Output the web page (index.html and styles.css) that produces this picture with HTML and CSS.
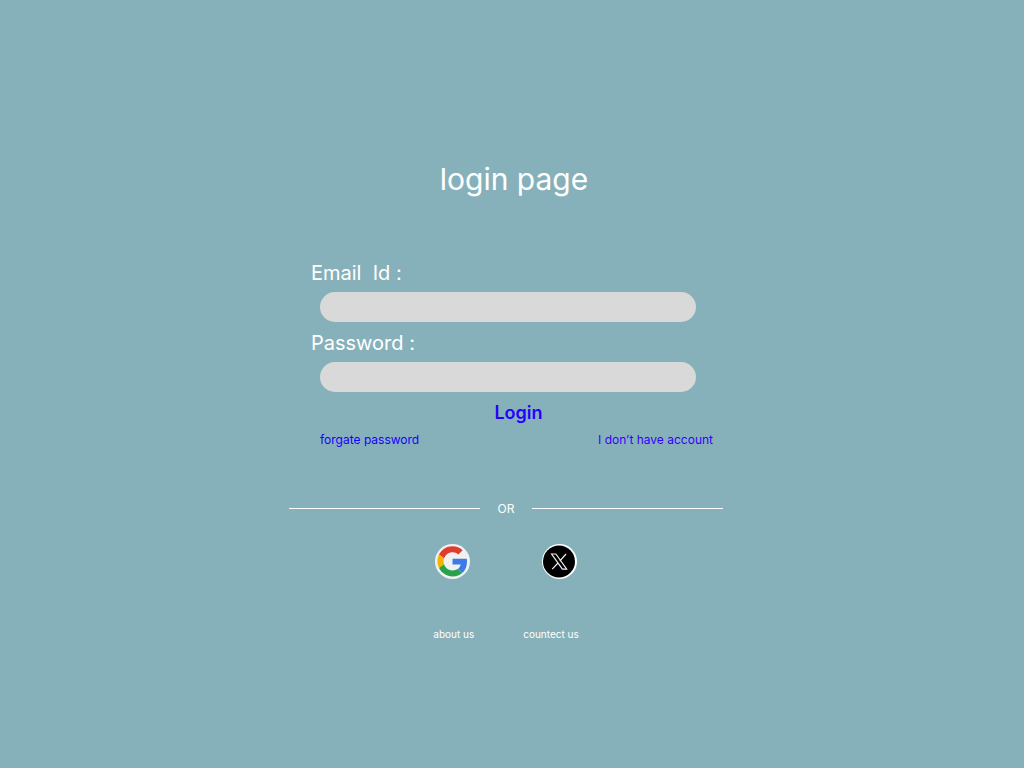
FILE: index.html
```html
<!DOCTYPE html>
<html lang="en">
<head>
<meta charset="utf-8">
<meta name="viewport" content="width=device-width, initial-scale=1">
<title>login page</title>
<link rel="stylesheet" href="styles.css">
</head>
<body>
<main class="login">
  <h1 class="title">login page</h1>
  <form class="form">
    <label class="label" for="email">Email&nbsp; Id :</label>
    <input class="field" id="email" type="email">
    <label class="label" for="password">Password :</label>
    <input class="field" id="password" type="password">
    <button class="submit" type="submit">Login</button>
  </form>
  <div class="help">
    <a class="forgot" href="#forgot">forgate password</a>
    <a class="signup" href="#signup">I don’t have account</a>
  </div>
  <div class="divider"><span>OR</span></div>
  <div class="social">
    <button class="provider" type="button" aria-label="Google">
      <svg viewBox="0 0 35 35" width="35" height="35" aria-hidden="true">
        <circle cx="17.500" cy="17.500" r="17.500" fill="#f1f1f1"/>
        <g transform="translate(2.400 2.200) scale(.63)">
          <path fill="#3f7be8" d="M46.980 24.550c0-1.570-.150-3.090-.380-4.550H24v9.020h12.940c-.580 2.960-2.260 5.480-4.780 7.180l7.730 6c4.510-4.180 7.090-10.360 7.090-17.650z"/>
          <path fill="#e03e2d" d="M24 9.500c3.540 0 6.710 1.220 9.210 3.600l6.850-6.850C35.900 2.380 30.470 0 24 0 14.620 0 6.510 5.380 2.560 13.220l7.980 6.190C12.430 13.720 17.740 9.500 24 9.500z"/>
          <path fill="#f4b400" d="M10.530 28.590c-.480-1.450-.760-2.990-.760-4.590s.270-3.140.760-4.590l-7.980-6.190C.920 16.460 0 20.120 0 24c0 3.880.920 7.540 2.560 10.780l7.970-6.190z"/>
          <path fill="#28a34c" d="M24 48c6.480 0 11.930-2.130 15.890-5.810l-7.730-6c-2.150 1.450-4.920 2.300-8.160 2.300-6.260 0-11.570-4.220-13.470-9.910l-7.980 6.190C6.510 42.620 14.620 48 24 48z"/>
        </g>
      </svg>
    </button>
    <button class="provider" type="button" aria-label="X">
      <svg viewBox="0 0 35 35" width="35" height="35" aria-hidden="true">
        <circle cx="17.500" cy="17.500" r="17.500" fill="#fff"/>
        <circle cx="17" cy="17.500" r="16" fill="#000"/>
        <path d="M9.600 10h4.300l10.800 15.200h-4.300zM24 10l-6.200 7M16 19l-5.800 6.200" fill="none" stroke="#eee" stroke-width="1.200"/>
      </svg>
    </button>
  </div>
  <footer class="footer">
    <a href="#about">about us</a>
    <a href="#contact">countect us</a>
  </footer>
</main>
</body>
</html>
```
FILE: styles.css
```css
* { box-sizing: border-box; }

body {
  min-height: 100vh;
  margin: 0;
  padding: 161px 12px 24px 0;
  background: #87b1ba;
  color: #fff;
  font-family: Inter, "Liberation Sans", sans-serif;
}

a { color: inherit; text-decoration: none; }

button {
  padding: 0;
  border: 0;
  background: none;
  font: inherit;
  cursor: pointer;
}

.login {
  max-width: 434px;
  margin: 0 auto;
}

.title {
  margin: 0 0 64px;
  padding-left: 16px;
  font-size: 30px;
  font-weight: 400;
  line-height: 36px;
  text-align: center;
}

.form {
  display: flex;
  flex-direction: column;
  padding: 0 27px 0 22px;
}

.label {
  margin-bottom: 7px;
  font-size: 20px;
  line-height: 24px;
}

.field {
  height: 30px;
  margin: 0 0 9px 9px;
  padding: 0 15px;
  border: 0;
  border-radius: 15px;
  background: #d9d9d9;
  font: inherit;
}

.submit {
  align-self: center;
  margin-left: 30px;
  color: #2400ff;
  font-size: 18px;
  font-weight: 600;
  line-height: 24px;
}

.help {
  display: flex;
  justify-content: space-between;
  margin-top: 7px;
  padding: 0 10px 0 31px;
  font-size: 12px;
  line-height: 16px;
}

.forgot { color: #1400ff; }
.signup { color: #3300ff; }

.divider {
  display: flex;
  align-items: center;
  gap: 18px;
  margin-top: 52px;
  font-size: 12px;
  line-height: 17px;
}

.divider::before,
.divider::after {
  flex: 1;
  height: 1px;
  background: #fff;
  content: "";
}

.social {
  display: flex;
  justify-content: center;
  gap: 72px;
  margin-top: 27px;
}

.provider svg { display: block; }

.footer {
  display: flex;
  justify-content: center;
  gap: 49px;
  margin-top: 47px;
  font-size: 10px;
  line-height: 16px;
}
```
